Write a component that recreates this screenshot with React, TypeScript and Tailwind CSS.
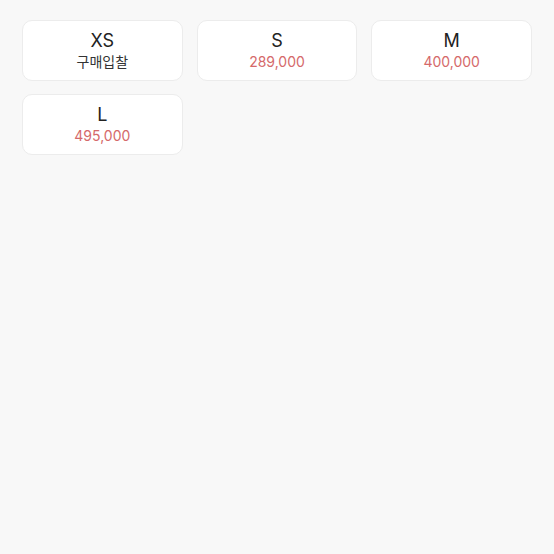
const sizes = [
  { label: 'XS', price: null },
  { label: 'S', price: '289,000' },
  { label: 'M', price: '400,000' },
  { label: 'L', price: '495,000' },
];

export default function App() {
  return (
    <div
      className="min-h-[554px] w-[554px] bg-[#f8f8f8] px-[22px] pt-[20px]"
      style={{ fontFamily: 'Inter, "Noto Sans CJK KR", sans-serif' }}
    >
      <div className="grid grid-cols-3 gap-x-[14px] gap-y-[13px]">
        {sizes.map((s) => (
          <button
            key={s.label}
            className="flex h-[61px] flex-col items-center justify-center rounded-[10px] border border-[#ececec] bg-white pt-[1px]"
          >
            <span className="text-[18px] leading-[22px] text-[#222]">{s.label}</span>
            {s.price ? (
              <span className="text-[14px] leading-[20px] text-[#d5696a]">{s.price}</span>
            ) : (
              <span className="text-[14px] leading-[20px] text-[#333]">구매입찰</span>
            )}
          </button>
        ))}
      </div>
    </div>
  );
}
